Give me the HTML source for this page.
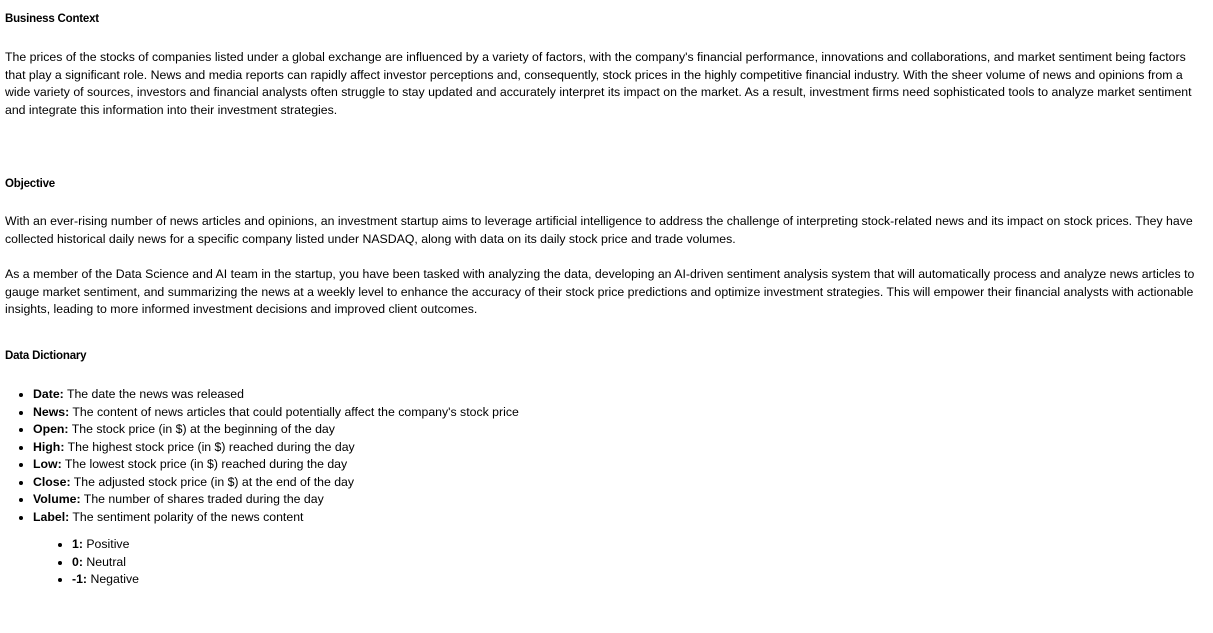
<!DOCTYPE html>
<html><head><meta charset="utf-8"><style>
body{margin:0;background:#fff;color:#000;font-family:"Liberation Sans",sans-serif;font-size:12.3px;line-height:17.5px}
.w{position:absolute;left:5px;width:1200px}
h4{font-size:11.5px;font-weight:bold;margin:0;position:absolute;left:5px;letter-spacing:-0.2px}
p{margin:0}
ul{margin:0;padding-left:33px}
ul ul{padding-left:39px;list-style:disc}
li{line-height:17.5px}
</style></head><body>
<h4 style="top:11px">Business Context</h4>
<div class="w" style="top:49px"><p>The prices of the stocks of companies listed under a global exchange are influenced by a variety of factors, with the company's financial performance, innovations and collaborations, and market sentiment being factors that play a significant role. News and media reports can rapidly affect investor perceptions and, consequently, stock prices in the highly competitive financial industry. With the sheer volume of news and opinions from a wide variety of sources, investors and financial analysts often struggle to stay updated and accurately interpret its impact on the market. As a result, investment firms need sophisticated tools to analyze market sentiment and integrate this information into their investment strategies.</p></div>
<h4 style="top:176px">Objective</h4>
<div class="w" style="top:213px"><p>With an ever-rising number of news articles and opinions, an investment startup aims to leverage artificial intelligence to address the challenge of interpreting stock-related news and its impact on stock prices. They have collected historical daily news for a specific company listed under NASDAQ, along with data on its daily stock price and trade volumes.</p></div>
<div class="w" style="top:266px"><p>As a member of the Data Science and AI team in the startup, you have been tasked with analyzing the data, developing an AI-driven sentiment analysis system that will automatically process and analyze news articles to gauge market sentiment, and summarizing the news at a weekly level to enhance the accuracy of their stock price predictions and optimize investment strategies. This will empower their financial analysts with actionable insights, leading to more informed investment decisions and improved client outcomes.</p></div>
<h4 style="top:348px">Data Dictionary</h4>
<div class="w" style="top:386px;left:0"><ul>
<li><b>Date:</b> The date the news was released</li>
<li><b>News:</b> The content of news articles that could potentially affect the company's stock price</li>
<li><b>Open:</b> The stock price (in $) at the beginning of the day</li>
<li><b>High:</b> The highest stock price (in $) reached during the day</li>
<li><b>Low:</b> The lowest stock price (in $) reached during the day</li>
<li><b>Close:</b> The adjusted stock price (in $) at the end of the day</li>
<li><b>Volume:</b> The number of shares traded during the day</li>
<li><b>Label:</b> The sentiment polarity of the news content
<ul style="margin-top:10px">
<li><b>1:</b> Positive</li>
<li><b>0:</b> Neutral</li>
<li><b>-1:</b> Negative</li>
</ul></li>
</ul></div>
</body></html>
